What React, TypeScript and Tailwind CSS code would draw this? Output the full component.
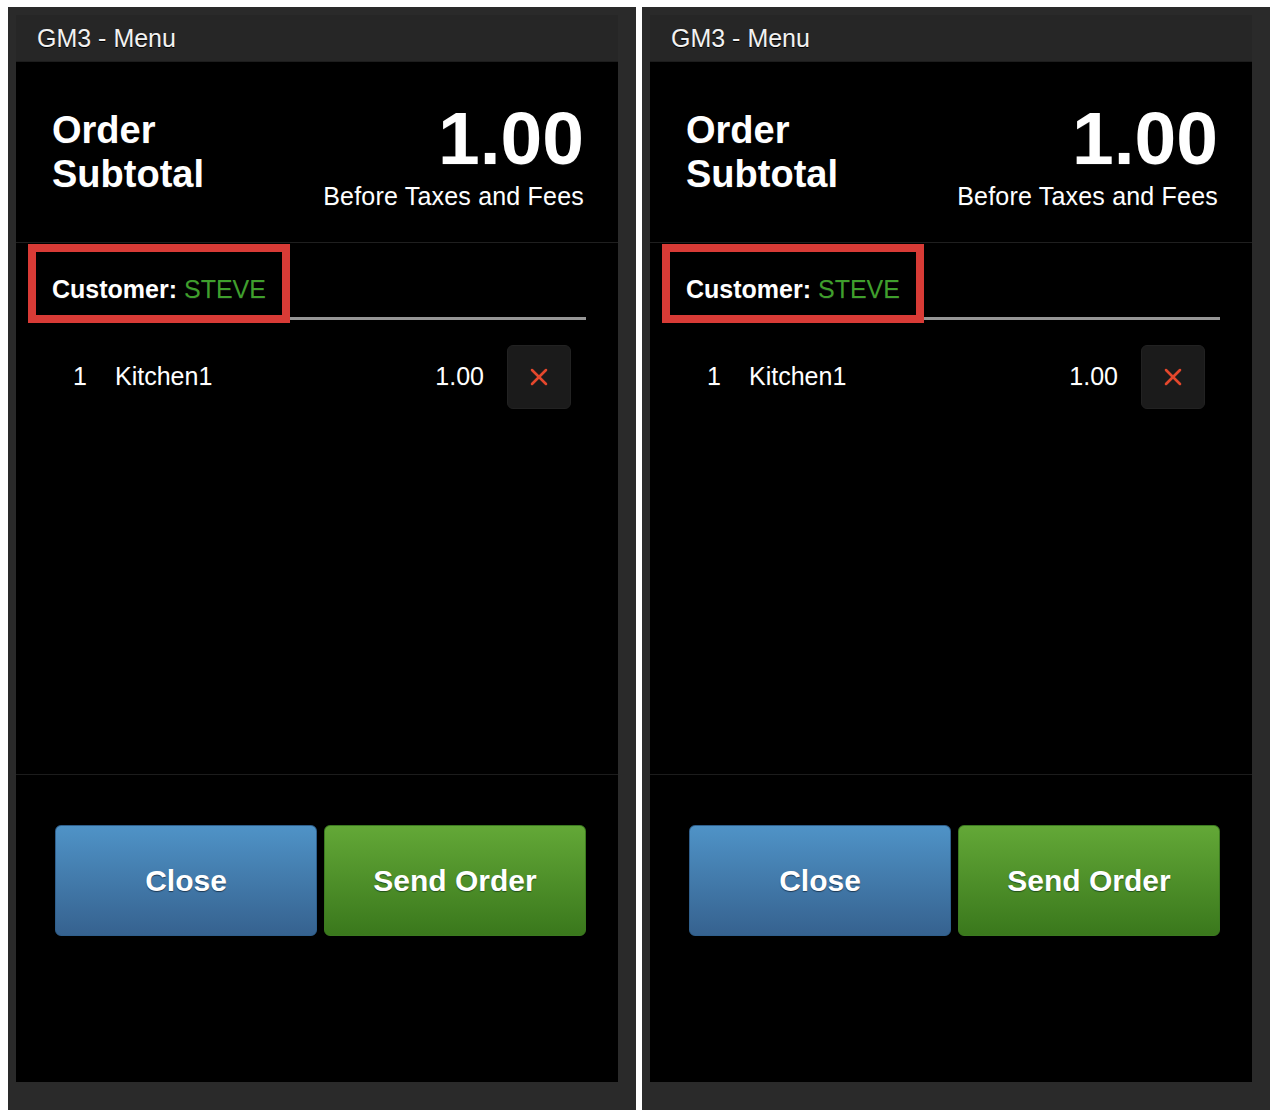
import { X } from 'lucide-react'

function OrderPanel() {
  return (
    <div className="h-[1103px] w-[628px] bg-[#2a2a2a] pl-[8px] pt-[8px]">
      <div className="flex h-[1067px] w-[602px] flex-col bg-black text-white">
        <header className="flex h-[47px] items-center border-b border-[#1d1d1d] bg-[#262626] pl-[21px]">
          <span className="text-[25px] leading-none text-[#f2f2f2] [text-shadow:0_1px_0_#000]">GM3 - Menu</span>
        </header>

        <section className="flex h-[181px] items-start justify-between border-b border-[#1f1f1f] pl-[36px] pr-[34px] pt-[39px]">
          <div className="mt-[7px] text-[38px] font-bold leading-[44px] [text-shadow:0_1px_0_#111]">
            <div>Order</div>
            <div>Subtotal</div>
          </div>
          <div className="flex flex-col items-end">
            <div className="text-[75px] font-bold leading-[75px] [text-shadow:0_1px_0_#111]">1.00</div>
            <div className="mt-[5px] text-[25px] leading-[30px] tracking-[0.2px] [text-shadow:0_1px_0_#111]">Before Taxes and Fees</div>
          </div>
        </section>

        <div className="h-[532px] border-b border-[#1c1c1c]">
          <div className="relative ml-[36px] mr-[32px] border-b-[3px] border-[#969696] pb-[13px] pt-[31px]">
            <div className="text-[25px] leading-[30px] [text-shadow:0_1px_0_#111]">
              <span className="font-bold">Customer:</span> <span className="text-[#3f9f2c]">STEVE</span>
            </div>
            <div className="absolute left-[-24px] top-[1px] h-[79px] w-[262px] border-[8px] border-[#d83b36]" />
          </div>

          <div className="mt-[25px] flex h-[64px] items-center pl-[57px] pr-[47px] text-[25px] [text-shadow:0_1px_0_#111]">
            <span className="w-[42px]">1</span>
            <span className="flex-1">Kitchen1</span>
            <span>1.00</span>
            <button className="ml-[23px] grid h-[64px] w-[64px] place-items-center rounded-md border border-[#222] bg-[#1b1b1b]">
              <X className="h-[28px] w-[28px] text-[#e4472c]" strokeWidth={2.2} />
            </button>
          </div>
        </div>

        <div className="flex gap-[7px] pl-[39px] pt-[50px]">
          <button className="h-[111px] w-[262px] rounded-md border border-[#2f5f8c] bg-gradient-to-b from-[#4f93c7] to-[#36628f] text-[30px] font-bold text-white [text-shadow:0_1px_1px_#1e3a55]">
            Close
          </button>
          <button className="h-[111px] w-[262px] rounded-md border border-[#3c7a20] bg-gradient-to-b from-[#63a837] to-[#3a781c] text-[30px] font-bold text-white [text-shadow:0_1px_1px_#24501a]">
            Send Order
          </button>
        </div>
      </div>
    </div>
  )
}

export default function App() {
  return (
    <div className="flex min-h-[1120px] gap-[6px] bg-white pl-[8px] pt-[7px] font-['Liberation_Sans',Arial,sans-serif]">
      <OrderPanel />
      <OrderPanel />
    </div>
  )
}
